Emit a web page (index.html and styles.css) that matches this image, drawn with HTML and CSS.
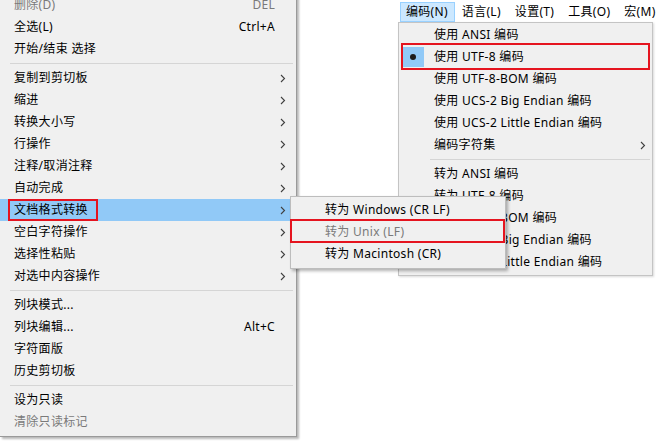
FILE: index.html
```html
<!DOCTYPE html>
<html lang="zh-CN">
<head>
<meta charset="utf-8">
<title>Menu</title>
<link rel="stylesheet" href="styles.css">
</head>
<body>
<div class="screen">
  <div class="menu main-menu">
    <div class="row disabled"><span class="label">删除(D)</span><span class="key">DEL</span><span></span></div>
    <div class="row"><span class="label">全选(L)</span><span class="key">Ctrl+A</span><span></span></div>
    <div class="row"><span class="label">开始/结束 选择</span><span class="key"></span><span></span></div>
    <div class="sep"></div>
    <div class="row"><span class="label">复制到剪切板</span><span class="key"></span><svg class="arrow" width="6" height="9" viewBox="0 0 6 9"><path d="M1 1 L4.5 4.5 L1 8" fill="none" stroke="#404040" stroke-width="1.1"/></svg></div>
    <div class="row"><span class="label">缩进</span><span class="key"></span><svg class="arrow" width="6" height="9" viewBox="0 0 6 9"><path d="M1 1 L4.5 4.5 L1 8" fill="none" stroke="#404040" stroke-width="1.1"/></svg></div>
    <div class="row"><span class="label">转换大小写</span><span class="key"></span><svg class="arrow" width="6" height="9" viewBox="0 0 6 9"><path d="M1 1 L4.5 4.5 L1 8" fill="none" stroke="#404040" stroke-width="1.1"/></svg></div>
    <div class="row"><span class="label">行操作</span><span class="key"></span><svg class="arrow" width="6" height="9" viewBox="0 0 6 9"><path d="M1 1 L4.5 4.5 L1 8" fill="none" stroke="#404040" stroke-width="1.1"/></svg></div>
    <div class="row"><span class="label">注释/取消注释</span><span class="key"></span><svg class="arrow" width="6" height="9" viewBox="0 0 6 9"><path d="M1 1 L4.5 4.5 L1 8" fill="none" stroke="#404040" stroke-width="1.1"/></svg></div>
    <div class="row"><span class="label">自动完成</span><span class="key"></span><svg class="arrow" width="6" height="9" viewBox="0 0 6 9"><path d="M1 1 L4.5 4.5 L1 8" fill="none" stroke="#404040" stroke-width="1.1"/></svg></div>
    <div class="row active"><span class="label">文档格式转换</span><span class="key"></span><svg class="arrow" width="6" height="9" viewBox="0 0 6 9"><path d="M1 1 L4.5 4.5 L1 8" fill="none" stroke="#404040" stroke-width="1.1"/></svg><span class="mark mark-left"></span></div>
    <div class="row"><span class="label">空白字符操作</span><span class="key"></span><svg class="arrow" width="6" height="9" viewBox="0 0 6 9"><path d="M1 1 L4.5 4.5 L1 8" fill="none" stroke="#404040" stroke-width="1.1"/></svg></div>
    <div class="row"><span class="label">选择性粘贴</span><span class="key"></span><svg class="arrow" width="6" height="9" viewBox="0 0 6 9"><path d="M1 1 L4.5 4.5 L1 8" fill="none" stroke="#404040" stroke-width="1.1"/></svg></div>
    <div class="row"><span class="label">对选中内容操作</span><span class="key"></span><svg class="arrow" width="6" height="9" viewBox="0 0 6 9"><path d="M1 1 L4.5 4.5 L1 8" fill="none" stroke="#404040" stroke-width="1.1"/></svg></div>
    <div class="sep"></div>
    <div class="row"><span class="label">列块模式...</span><span class="key"></span><span></span></div>
    <div class="row"><span class="label">列块编辑...</span><span class="key">Alt+C</span><span></span></div>
    <div class="row"><span class="label">字符面版</span><span class="key"></span><span></span></div>
    <div class="row"><span class="label">历史剪切板</span><span class="key"></span><span></span></div>
    <div class="sep"></div>
    <div class="row"><span class="label">设为只读</span><span class="key"></span><span></span></div>
    <div class="row disabled"><span class="label">清除只读标记</span><span class="key"></span><span></span></div>
  </div>

  <div class="window">
    <div class="menubar">
      <span class="mb-item open">编码(N)</span>
      <span class="mb-item">语言(L)</span>
      <span class="mb-item">设置(T)</span>
      <span class="mb-item">工具(O)</span>
      <span class="mb-item">宏(M)</span>
    </div>
    <div class="menu drop">
      <div class="drow"><span class="check"></span><span class="label">使用 ANSI 编码</span><span></span></div>
      <div class="drow"><span class="check checked"><span class="dot"></span></span><span class="label">使用 UTF-8 编码</span><span></span><span class="mark mark-drop"></span></div>
      <div class="drow"><span class="check"></span><span class="label">使用 UTF-8-BOM 编码</span><span></span></div>
      <div class="drow"><span class="check"></span><span class="label">使用 UCS-2 Big Endian 编码</span><span></span></div>
      <div class="drow"><span class="check"></span><span class="label">使用 UCS-2 Little Endian 编码</span><span></span></div>
      <div class="drow"><span class="check"></span><span class="label">编码字符集</span><svg class="arrow" width="6" height="9" viewBox="0 0 6 9"><path d="M1 1 L4.5 4.5 L1 8" fill="none" stroke="#404040" stroke-width="1.1"/></svg></div>
      <div class="sep dsep"></div>
      <div class="drow"><span class="check"></span><span class="label">转为 ANSI 编码</span><span></span></div>
      <div class="drow"><span class="check"></span><span class="label">转为 UTF-8 编码</span><span></span></div>
      <div class="drow"><span class="check"></span><span class="label">转为 UTF-8-BOM 编码</span><span></span></div>
      <div class="drow"><span class="check"></span><span class="label">转为 UCS-2 Big Endian 编码</span><span></span></div>
      <div class="drow"><span class="check"></span><span class="label">转为 UCS-2 Little Endian 编码</span><span></span></div>
    </div>
  </div>

  <div class="menu submenu">
    <div class="srow">转为 Windows (CR LF)</div>
    <div class="srow disabled">转为 Unix (LF)<span class="mark mark-sub"></span></div>
    <div class="srow">转为 Macintosh (CR)</div>
  </div>
</div>
</body>
</html>
```

FILE: styles.css
```css
html, body {
  margin: 0;
  padding: 0;
  background: #ffffff;
}

.screen {
  position: relative;
  width: 657px;
  height: 445px;
  overflow: hidden;
  display: flow-root;
  background: #ffffff;
  font-family: "Noto Sans", "Noto Sans CJK SC", sans-serif;
  font-size: 12px;
  letter-spacing: 0.3px;
  color: #000000;
}

.menu {
  background: #f0f0f0;
  box-sizing: border-box;
}

.main-menu {
  width: 297px;
  margin-top: -6px;
  padding-bottom: 3px;
  border-right: 1px solid #9a9a9a;
  border-bottom: 1px solid #9a9a9a;
  box-shadow: 2px 2px 2px rgba(0, 0, 0, 0.28);
}

.row {
  position: relative;
  display: grid;
  grid-template-columns: 1fr auto 21px;
  align-items: center;
  height: 22px;
  padding-left: 14px;
  line-height: 22px;
  white-space: nowrap;
}

.row.active {
  background: #91c9f7;
  margin-right: 2px;
  grid-template-columns: 1fr auto 19px;
}

.disabled {
  color: #7a7a7a;
}

.key {
  text-align: right;
}

.arrow {
  justify-self: start;
  margin-left: 5px;
  display: block;
}

.sep {
  height: 7px;
  display: flex;
  align-items: center;
  padding: 0 3px 0 10px;
}

.sep::before {
  content: "";
  flex: 1;
  height: 1px;
  background: #d5d5d5;
}

.mark {
  position: absolute;
  border: 2px solid #e5141f;
  box-sizing: border-box;
  pointer-events: none;
}

.mark-left {
  left: 8px;
  width: 90px;
  top: 0;
  bottom: 0;
}

/* right window */
.window {
  position: absolute;
  left: 398px;
  top: 0;
  width: 259px;
  height: 278px;
}

.menubar {
  height: 22px;
  background: #ffffff;
  display: flex;
  align-items: stretch;
  padding: 2px 0 0 2px;
  box-sizing: border-box;
  gap: 1px;
  white-space: nowrap;
}

.mb-item {
  display: flex;
  align-items: center;
  padding: 0 6px 0 5px;
  border: 1px solid transparent;
  line-height: 18px;
}

.mb-item.open {
  background: #cce8ff;
  border-color: #99d1ff;
}

.drop {
  width: 255px;
  padding: 1px 0 2px 0;
  border: 1px solid #c4c4c4;
  box-shadow: 1px 1px 2px rgba(0, 0, 0, 0.15);
}

.drow {
  position: relative;
  display: grid;
  grid-template-columns: 35px 1fr 12px;
  align-items: center;
  height: 22px;
  line-height: 22px;
  white-space: nowrap;
}

.check {
  height: 20px;
  margin-left: 3px;
  width: 22px;
  display: flex;
  align-items: center;
  justify-content: center;
}

.check.checked {
  background: #91c9f7;
}

.dot {
  width: 6px;
  height: 6px;
  border-radius: 50%;
  background: #1c1c1c;
}

.drow .arrow {
  margin-left: 0;
}

.dsep {
  padding: 0 2px 0 31px;
}

.mark-drop {
  left: 2px;
  right: 2px;
  top: -3px;
  bottom: -2px;
}

/* submenu */
.submenu {
  position: absolute;
  left: 290px;
  top: 196px;
  width: 216px;
  padding: 2px 0 3px 0;
  border: 1px solid #bdbdbd;
  box-shadow: 2px 2px 3px rgba(0, 0, 0, 0.3);
}

.srow {
  position: relative;
  height: 22px;
  line-height: 22px;
  padding-left: 34px;
  white-space: nowrap;
}

.mark-sub {
  left: -1px;
  right: 0;
  top: -2px;
  bottom: 0;
}
```
